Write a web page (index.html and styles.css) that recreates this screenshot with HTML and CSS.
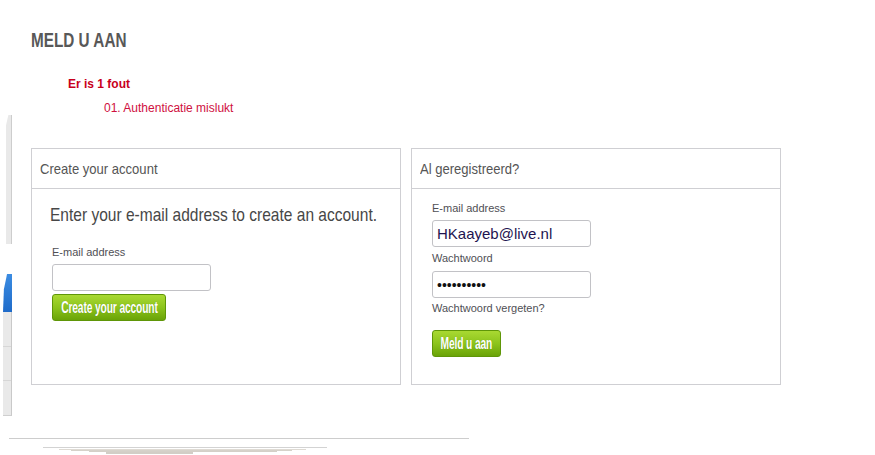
FILE: index.html
```html
<!DOCTYPE html>
<html lang="nl">
<head>
<meta charset="utf-8">
<title>Meld u aan</title>
<link rel="stylesheet" href="styles.css">
</head>
<body>
<div class="edge" aria-hidden="true">
  <div class="edge-bar"></div>
  <div class="edge-tab"></div>
  <div class="edge-list"><div></div><div></div><div></div></div>
</div>
<main class="page">
  <h1 class="title"><span>MELD U AAN</span></h1>
  <div class="errors">
    <p class="err-head">Er is 1 fout</p>
    <ol class="err-list"><li>01. Authenticatie mislukt</li></ol>
  </div>
  <div class="boxes">
    <section class="box">
      <h2 class="box-head"><span>Create your account</span></h2>
      <form class="box-body create-body">
        <h3 class="lead"><span>Enter your e-mail address to create an account.</span></h3>
        <label class="lbl lbl-create" for="new-email">E-mail address</label>
        <input class="field" id="new-email" type="text">
        <button class="btn btn-create" type="button"><span>Create your account</span></button>
      </form>
    </section>
    <section class="box">
      <h2 class="box-head"><span>Al geregistreerd?</span></h2>
      <form class="box-body login-body">
        <label class="lbl" for="email">E-mail address</label>
        <input class="field" id="email" type="text" value="HKaayeb@live.nl">
        <label class="lbl lbl-pass" for="pass">Wachtwoord</label>
        <input class="field field-pass" id="pass" type="password" value="0123456789">
        <a class="forgot" href="#">Wachtwoord vergeten?</a>
        <button class="btn btn-login" type="button"><span>Meld u aan</span></button>
      </form>
    </section>
  </div>
</main>
<footer class="foot" aria-hidden="true">
  <div class="foot-line"></div>
  <div class="shadow">
    <div class="sh sh1"></div>
    <div class="sh sh2"></div>
    <div class="sh sh3"></div>
    <div class="sh sh4"></div>
    <div class="sh sh5"></div>
  </div>
</footer>
</body>
</html>
```

FILE: styles.css
```css
* { box-sizing: border-box; }

html, body { background: #fff; }

body {
  margin: 0;
  font-family: "Liberation Sans", Arial, sans-serif;
  color: #555;
  position: relative;
  height: 455px;
  overflow: hidden;
}

/* left-edge clipped widgets */
.edge { position: absolute; left: 0; top: 0; width: 12px; height: 455px; }
.edge-bar {
  position: absolute; left: 6px; top: 115px; width: 6px; height: 129px;
  background: #e9e9e9; border-right: 1px solid #cdcdcd;
  clip-path: polygon(40% 0, 100% 0, 100% 100%, 0 100%, 0 8%);
}
.edge-tab {
  position: absolute; left: 3px; top: 274px; width: 9px; height: 38px;
  background: linear-gradient(#3b8ce2, #1f6bc9);
  clip-path: polygon(45% 0, 100% 0, 100% 100%, 0 100%, 10% 40%);
}
.edge-list {
  position: absolute; left: 3px; top: 312px; width: 9px; height: 104px;
  background: #e9e9e9; border-right: 1px solid #c9c9c9; border-bottom: 1px solid #cfcfcf;
  display: flex; flex-direction: column;
}
.edge-list div { flex: 1; border-bottom: 1px solid #d6d6d6; }
.edge-list div:last-child { border-bottom: 0; }

.page { padding-left: 31px; }

.title {
  margin: 28px 0 0;
  height: 24px;
  font-size: 20px;
  line-height: 24px;
  font-weight: bold;
  color: #585858;
}
.title span { display: inline-block; transform: scaleX(0.765); transform-origin: left center; white-space: nowrap; }

.errors { margin-top: 25px; }
.err-head {
  margin: 0 0 0 37px;
  font-size: 12px;
  line-height: 15px;
  font-weight: bold;
  color: #c8001c;
}
.err-list {
  margin: 9px 0 0;
  padding-left: 73px;
  list-style: none;
  font-size: 12px;
  line-height: 15px;
  color: #cf1040;
}

.boxes { display: flex; gap: 10px; margin-top: 32px; }
.box {
  width: 370px;
  height: 237px;
  border: 1px solid #cfcfd3;
}
.box-head {
  margin: 0;
  height: 40px;
  padding: 1px 0 0 8px;
  border-bottom: 1px solid #cfcfd3;
  font-size: 15px;
  line-height: 37px;
  font-weight: normal;
  color: #555;
}
.box-head span { display: inline-block; transform: scaleX(0.87); transform-origin: left center; white-space: nowrap; }

.box-body { display: flex; flex-direction: column; align-items: flex-start; margin: 0; }
.create-body { padding: 15px 20px 0; }
.login-body { padding: 12px 20px 0; }

.lead {
  margin: 0 0 0 -2px;
  font-size: 19px;
  line-height: 22px;
  font-weight: normal;
  color: #474747;
}
.lead span { display: inline-block; transform: scaleX(0.817); transform-origin: left center; white-space: nowrap; }

.lbl {
  display: block;
  font-size: 11px;
  line-height: 14px;
  color: #4f4f55;
  margin-bottom: 5px;
}
.lbl-create { margin-top: 19px; }
.lbl-pass { margin-top: 4px; margin-bottom: 6px; }

.field {
  width: 159px;
  height: 27px;
  margin: 0;
  padding: 0 0 0 4px;
  border: 1px solid #c2c2c6;
  border-radius: 3px;
  background: #fff;
  font-family: "Liberation Sans", Arial, sans-serif;
  font-size: 15px;
  color: #1e1450;
  outline: none;
}
.field-pass { font-size: 14px; color: #111; }

.forgot {
  margin-top: 3px;
  font-size: 11px;
  line-height: 14px;
  color: #4f4f55;
  text-decoration: none;
}

.btn {
  display: flex;
  justify-content: center;
  align-items: center;
  height: 27px;
  padding: 0;
  border: 1px solid #5f9608;
  border-radius: 3px;
  background: linear-gradient(#a9d932, #8cc41c 50%, #6aa308);
  color: #fff;
  font-family: "Liberation Sans", Arial, sans-serif;
  font-size: 16px;
  font-weight: bold;
  overflow: visible;
  cursor: pointer;
}
.btn span {
  display: inline-block;
  flex: none;
  white-space: nowrap;
  transform: scaleX(0.64);
  letter-spacing: -0.2px;
  text-shadow: 0 0 1px rgba(40, 80, 0, 0.35);
}
.btn-create { width: 114px; margin-top: 3px; }
.btn-login { width: 69px; margin-top: 15px; }

.foot { margin-top: 53px; padding-left: 9px; }
.foot-line { width: 460px; height: 1px; background: #cdcdcd; }
.shadow { margin-top: 8px; display: flex; flex-direction: column; }
.sh { height: 1px; }
.sh1 { margin-left: 34px; width: 284px; background: #d3d3d3; margin-bottom: 1px; }
.sh2 { margin-left: 50px; width: 247px; background: #dedad3; }
.sh3 { margin-left: 62px; width: 221px; background: #d6d2ca; }
.sh4 { margin-left: 80px; width: 188px; background: #d4d0c8; }
.sh5 { margin-left: 97px; width: 87px; height: 2px; background: #d2cec6; }
```
